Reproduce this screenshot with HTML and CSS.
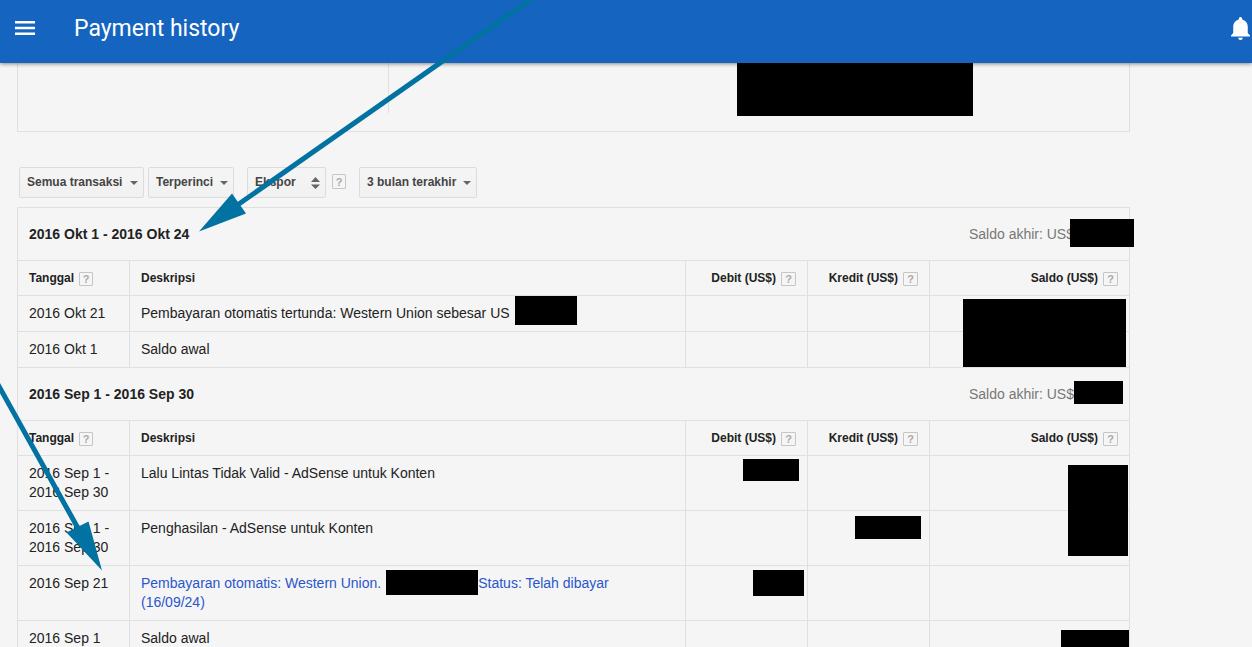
FILE: index.html
```html
<!DOCTYPE html>
<html lang="id">
<head>
<meta charset="utf-8">
<meta name="viewport" content="width=device-width, initial-scale=1">
<title>Payment history</title>
<link rel="stylesheet" href="styles.css">
</head>
<body>
<header class="topbar">
  <button class="icon-button" type="button" aria-label="Menu">
    <svg width="20" height="14" viewBox="0 0 20 14" aria-hidden="true"><path fill="#fff" d="M0 0h20v2.500H0zM0 5.700h20v2.500H0zM0 11.500h20V14H0z"/></svg>
  </button>
  <h1 class="topbar-title">Payment history</h1>
  <button class="icon-button icon-button-end" type="button" aria-label="Notifications">
    <svg width="19" height="23" viewBox="3 2 17 20" preserveAspectRatio="none" aria-hidden="true"><path fill="#fff" d="M11.500 22c1.100 0 2-.9 2-2h-4c0 1.100.9 2 2 2zm6.500-6v-5.500c0-3.070-2.130-5.640-5-6.320V3.500c0-.83-.67-1.500-1.500-1.500S10 2.670 10 3.500v.68c-2.870.68-5 3.250-5 6.320V16l-2 2v1h17v-1l-2-2z"/></svg>
  </button>
</header>

<main class="content">
  <section class="summary">
    <div class="summary-main"></div>
    <div class="summary-side"><div class="summary-amount"></div></div>
  </section>

  <form class="filters">
    <span class="picker picker-type">
      <select class="picker-select" aria-label="Jenis transaksi"><option>Semua transaksi</option></select>
      <svg class="picker-arrow" width="8" height="4" viewBox="0 0 8 4" aria-hidden="true"><path d="M0 0h8L4 4z"/></svg>
    </span>
    <span class="picker picker-detail">
      <select class="picker-select" aria-label="Tampilan"><option>Terperinci</option></select>
      <svg class="picker-arrow" width="8" height="4" viewBox="0 0 8 4" aria-hidden="true"><path d="M0 0h8L4 4z"/></svg>
    </span>
    <span class="picker picker-export">
      <select class="picker-select" aria-label="Ekspor"><option>Ekspor</option></select>
      <svg class="picker-arrow" width="9" height="12" viewBox="0 0 9 12" aria-hidden="true"><path d="M0 5h9L4.500 0zM0 7.500h9L4.500 12z"/></svg>
    </span>
    <button class="help" type="button" aria-label="Bantuan ekspor">?</button>
    <span class="picker picker-range">
      <select class="picker-select" aria-label="Rentang waktu"><option>3 bulan terakhir</option></select>
      <svg class="picker-arrow" width="8" height="4" viewBox="0 0 8 4" aria-hidden="true"><path d="M0 0h8L4 4z"/></svg>
    </span>
  </form>

  <div class="ledger">
    <section>
      <div class="period">
        <h2 class="period-title">2016 Okt 1 - 2016 Okt 24</h2>
        <div class="period-balance">Saldo akhir: US$<span class="period-amount"><span class="mask mask-okt-total"></span></span></div>
      </div>
      <table class="entries">
        <thead>
          <tr>
            <th class="col-date" scope="col">Tanggal<button class="help" type="button" aria-label="Bantuan tanggal">?</button></th>
            <th scope="col">Deskripsi</th>
            <th class="col-amount" scope="col">Debit (US$)<button class="help" type="button" aria-label="Bantuan debit">?</button></th>
            <th class="col-amount" scope="col">Kredit (US$)<button class="help" type="button" aria-label="Bantuan kredit">?</button></th>
            <th class="col-balance" scope="col">Saldo (US$)<button class="help" type="button" aria-label="Bantuan saldo">?</button></th>
          </tr>
        </thead>
        <tbody>
          <tr><td>2016 Okt 21</td><td>Pembayaran otomatis tertunda: Western Union sebesar US<span class="mask-anchor"><span class="mask mask-pending"></span></span></td><td></td><td></td><td><span class="mask mask-okt-balance"></span></td></tr>
          <tr><td>2016 Okt 1</td><td>Saldo awal</td><td></td><td></td><td></td></tr>
        </tbody>
      </table>
    </section>

    <section>
      <div class="period">
        <h2 class="period-title">2016 Sep 1 - 2016 Sep 30</h2>
        <div class="period-balance">Saldo akhir: US$<span class="period-amount"><span class="mask mask-sep-total"></span></span></div>
      </div>
      <table class="entries">
        <thead>
          <tr>
            <th class="col-date" scope="col">Tanggal<button class="help" type="button" aria-label="Bantuan tanggal">?</button></th>
            <th scope="col">Deskripsi</th>
            <th class="col-amount" scope="col">Debit (US$)<button class="help" type="button" aria-label="Bantuan debit">?</button></th>
            <th class="col-amount" scope="col">Kredit (US$)<button class="help" type="button" aria-label="Bantuan kredit">?</button></th>
            <th class="col-balance" scope="col">Saldo (US$)<button class="help" type="button" aria-label="Bantuan saldo">?</button></th>
          </tr>
        </thead>
        <tbody>
          <tr><td>2016 Sep 1 -<br>2016 Sep 30</td><td>Lalu Lintas Tidak Valid - AdSense untuk Konten</td><td><span class="mask mask-invalid"></span></td><td></td><td><span class="mask mask-sep-balance"></span></td></tr>
          <tr><td>2016 Sep 1 -<br>2016 Sep 30</td><td>Penghasilan - AdSense untuk Konten</td><td></td><td><span class="mask mask-earning"></span></td><td></td></tr>
          <tr><td>2016 Sep 21</td><td><a class="entry-link" href="#">Pembayaran otomatis: Western Union.<span class="inline-mask"><span class="mask mask-transfer"></span></span>Status: Telah dibayar<br>(16/09/24)</a></td><td><span class="mask mask-payment"></span></td><td></td><td></td></tr>
          <tr><td>2016 Sep 1</td><td>Saldo awal</td><td></td><td></td><td><span class="mask mask-opening"></span></td></tr>
        </tbody>
      </table>
    </section>
  </div>
</main>

<svg class="pointers" width="540" height="580" viewBox="0 0 540 580" aria-hidden="true">
  <g fill="#0272a2" stroke="none">
    <path stroke="#0272a2" stroke-width="5" d="M534-3L236 206M-4 381L79 530"/>
    <path d="M199 231.500L232 193.500L246 213.500zM102 570.500L88.500 521.500L66.500 532.500z"/>
  </g>
</svg>
</body>
</html>
```
FILE: styles.css
```css
* {
  box-sizing: border-box;
}

body {
  position: relative;
  height: 100vh;
  margin: 0;
  overflow: hidden;
  background: #f5f5f5;
  color: #222;
  font: 14px/19px "Liberation Sans", Arial, sans-serif;
}

button {
  padding: 0;
  border: 0;
  background: none;
}

.topbar {
  position: relative;
  display: flex;
  align-items: center;
  height: 63px;
  padding: 0 2px 7px 15px;
  background: #1565c0;
  box-shadow: 0 1px 4px rgba(0, 0, 0, 0.45);
}

.icon-button {
  display: flex;
}

.icon-button-end {
  margin-left: auto;
}

.topbar-title {
  margin: 0 0 0 39px;
  padding-top: 2px;
  color: #fff;
  font: 400 23px/30px Roboto, sans-serif;
}

.content {
  padding: 0 122px 0 17px;
}

.summary {
  display: flex;
  height: 69px;
  border: 1px solid #e0e0e0;
  border-top: 0;
}

.summary-main {
  width: 371px;
  height: 50px;
  border-right: 1px solid #e0e0e0;
}

.summary-side {
  flex: 1;
  padding-left: 348px;
}

.summary-amount {
  position: relative;
  width: 236px;
  height: 53px;
  background: #000;
}

.filters {
  display: flex;
  align-items: center;
  padding: 35px 2px 9px;
}

.picker {
  display: grid;
  align-items: center;
  margin-right: 4px;
}

.picker-select,
.picker-arrow {
  grid-area: 1 / 1;
}

.picker-select {
  width: 100%;
  height: 31px;
  padding: 0 0 2px 7px;
  border: 1px solid #dcdcdc;
  border-radius: 2px;
  background: linear-gradient(#f5f5f5, #f1f1f1);
  color: #444;
  font: bold 12px/16px "Liberation Sans", Arial, sans-serif;
  appearance: none;
}

.picker-arrow {
  justify-self: end;
  margin-right: 6px;
  fill: #666;
  pointer-events: none;
}

.picker-type {
  width: 125px;
}

.picker-detail {
  width: 86px;
  margin-right: 13px;
}

.picker-export {
  width: 79px;
  margin-right: 6px;
}

.picker-range {
  width: 118px;
  margin-left: 13px;
}

.help {
  width: 14px;
  height: 14px;
  border: 1px solid #c6c6c6;
  border-radius: 1px;
  color: #aaa;
  font: bold 11px/12px "Liberation Sans", Arial, sans-serif;
  text-align: center;
}

.filters .help {
  height: 15px;
  margin-bottom: 2px;
}

.ledger {
  border: 1px solid #e0e0e0;
}

.period {
  display: flex;
  align-items: center;
  justify-content: space-between;
  height: 52px;
  padding-left: 11px;
}

.period-title {
  margin: 0;
  font-size: 14px;
  line-height: 19px;
}

.period-balance {
  display: flex;
  color: #777;
}

.period-amount {
  position: relative;
  width: 55px;
}

.entries {
  width: 100%;
  border-collapse: separate;
  border-spacing: 0;
  table-layout: fixed;
  border-bottom: 1px solid #e0e0e0;
}

.entries th,
.entries td {
  position: relative;
  padding: 8px 11px;
  border-top: 1px solid #e0e0e0;
  border-left: 1px solid #e0e0e0;
  text-align: left;
  vertical-align: top;
}

.entries th:first-child,
.entries td:first-child {
  border-left: 0;
}

.entries th {
  height: 35px;
  padding-top: 1px;
  padding-bottom: 0;
  font-size: 12px;
  vertical-align: middle;
}

.entries .help {
  margin-left: 5px;
  vertical-align: middle;
}

.entries .col-date {
  width: 111px;
}

.entries .col-amount {
  width: 122px;
  text-align: right;
}

.entries .col-balance {
  width: 200px;
  text-align: right;
}

.entries .col-amount .help,
.entries .col-balance .help {
  width: 15px;
}

.entry-link {
  color: #2a56cc;
  text-decoration: none;
}

.mask {
  position: absolute;
  z-index: 1;
  background: #000;
}

.mask-anchor {
  position: relative;
}

.inline-mask {
  position: relative;
  display: inline-block;
  width: 97px;
}

.mask-okt-total {
  top: -6px;
  left: -4px;
  width: 64px;
  height: 28px;
}

.mask-pending {
  top: -9px;
  left: 5px;
  width: 62px;
  height: 29px;
}

.mask-okt-balance {
  top: 3px;
  right: 3px;
  width: 163px;
  height: 68px;
}

.mask-sep-total {
  top: -4px;
  left: 0;
  width: 49px;
  height: 23px;
}

.mask-invalid {
  top: 3px;
  right: 8px;
  width: 56px;
  height: 22px;
}

.mask-sep-balance {
  top: 9px;
  right: 1px;
  width: 60px;
  height: 91px;
}

.mask-earning {
  top: 5px;
  right: 8px;
  width: 66px;
  height: 23px;
}

.mask-transfer {
  top: -18px;
  right: 0;
  width: 92px;
  height: 25px;
}

.mask-payment {
  top: 4px;
  right: 3px;
  width: 51px;
  height: 26px;
}

.mask-opening {
  top: 9px;
  right: 0;
  width: 68px;
  height: 20px;
}

.pointers {
  position: absolute;
  z-index: 2;
  top: 0;
  left: 0;
  pointer-events: none;
}
```
